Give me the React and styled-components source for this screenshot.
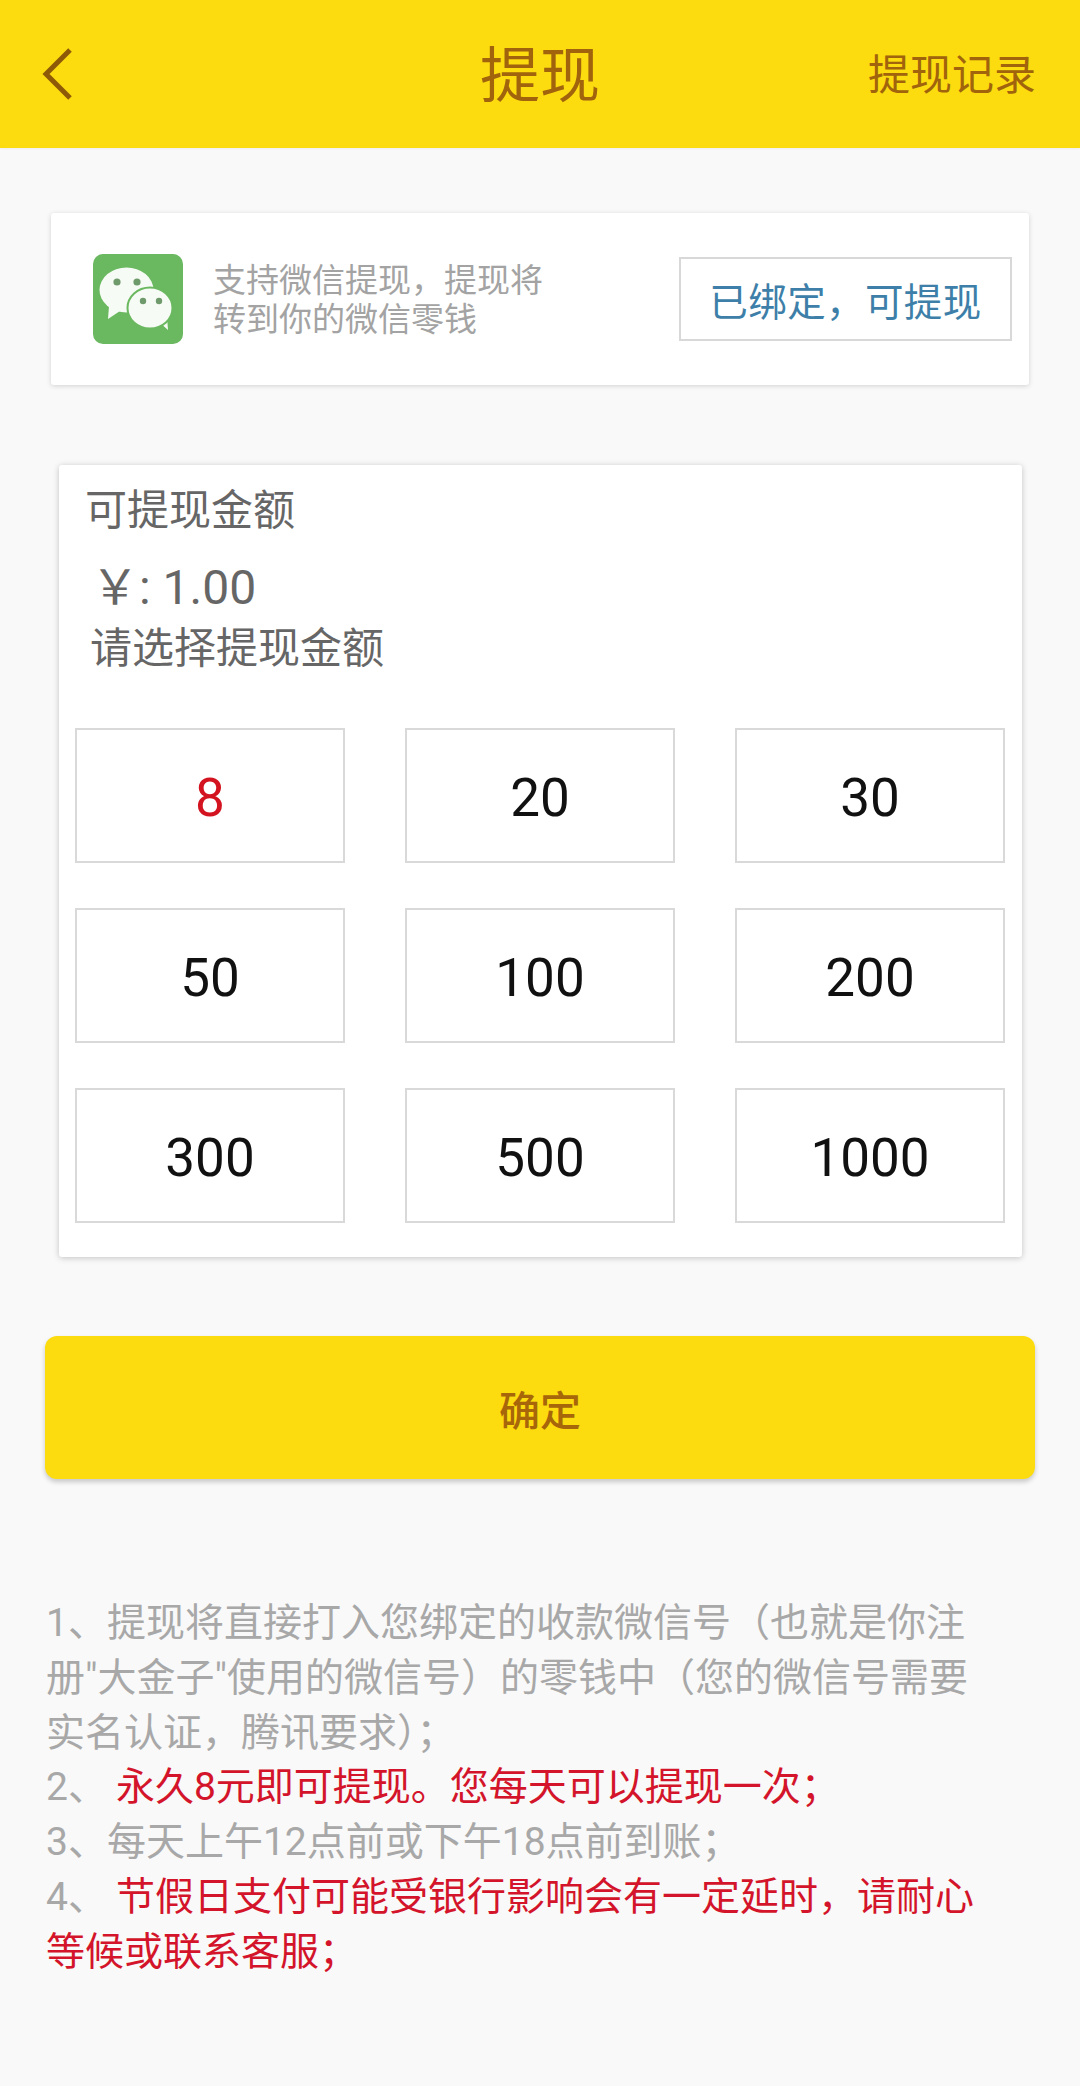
import React from "react";
import styled, { createGlobalStyle } from "styled-components";

const Global = createGlobalStyle`
  html, body { margin: 0; padding: 0; background: #f9f9f9; }
  * { box-sizing: border-box; }
  body { font-family: Roboto, "Noto Sans CJK SC", sans-serif; }
`;

const Page = styled.div`
  width: 1080px;
  height: 2086px;
  overflow: hidden;
  background: #f9f9f9;
  display: flex;
  flex-direction: column;
`;

const Header = styled.header`
  height: 148px;
  background: #fcdc0f;
  display: grid;
  grid-template-columns: 1fr auto 1fr;
  align-items: center;
  padding: 0 44px 0 42px;
  color: #a1640c;
  box-shadow: 0 1px 2px rgba(0, 0, 0, 0.05);
`;

const Back = styled.svg`
  width: 32px;
  height: 52px;
  display: block;
`;

const Title = styled.h1`
  margin: 6px 0 0 2px;
  font-size: 60px;
  font-weight: 400;
  line-height: 70px;
`;

const Record = styled.div`
  justify-self: end;
  font-size: 42px;
  line-height: 50px;
  margin-top: 4px;
`;

const BindCard = styled.section`
  margin: 65px 51px 0 51px;
  height: 172px;
  background: #fff;
  box-shadow: 0 1px 5px rgba(0, 0, 0, 0.16);
  border-radius: 3px;
  display: flex;
  align-items: center;
  padding: 0 17px 0 42px;
`;

const IconBox = styled.div`
  width: 90px;
  height: 90px;
  flex: none;
  background: #6ab85f;
  border-radius: 10px;
  display: flex;
  margin-bottom: 1px;
`;

const BindText = styled.p`
  margin: 2px 0 0 30px;
  flex: 1;
  font-size: 33px;
  line-height: 39px;
  color: #a3a3a3;
`;

const BindButton = styled.div`
  width: 333px;
  height: 84px;
  border: 2px solid #d8d8d8;
  background: #fff;
  color: #3d7fa8;
  font-size: 38.5px;
  letter-spacing: 0.4px;
  display: flex;
  align-items: center;
  justify-content: center;
`;

const AmountCard = styled.section`
  margin: 80px 58px 0 59px;
  height: 792px;
  background: #fff;
  border-radius: 3px;
  box-shadow: 0 1px 6px rgba(0, 0, 0, 0.22);
  padding: 0 16px;
  display: flex;
  flex-direction: column;
`;

const CardLabel = styled.div`
  margin: 21px 0 0 10px;
  font-size: 42px;
  line-height: 50px;
  color: #666;
`;

const Balance = styled.div`
  margin: 24px 0 0 16px;
  font-size: 48px;
  line-height: 56px;
  color: #666;
`;

const Prompt = styled.div`
  margin: 8px 0 0 15px;
  font-size: 42px;
  line-height: 50px;
  color: #666;
`;

const Grid = styled.div`
  margin-top: 54px;
  display: grid;
  grid-template-columns: repeat(3, 270px);
  grid-auto-rows: 135px;
  column-gap: 60px;
  row-gap: 45px;
`;

const Cell = styled.div`
  border: 2px solid #d9d9d9;
  padding-top: 4px;
  display: flex;
  align-items: center;
  justify-content: center;
  font-size: 53px;
  color: ${(p) => (p.$active ? "#d3131f" : "#111")};
`;

const Submit = styled.button`
  margin: 79px 45px 0 45px;
  height: 143px;
  border: 0;
  border-radius: 12px;
  background: #fcdc0f;
  color: #a8660a;
  font-family: inherit;
  font-size: 41px;
  font-weight: 500;
  box-shadow: 0 3px 5px rgba(0, 0, 0, 0.2);
`;

const Notes = styled.div`
  margin: 117px 45px 0 46px;
  font-size: 39px;
  line-height: 54.8px;
  color: #a8a8a8;
`;

const NoteLine = styled.div`
  white-space: nowrap;
`;

const Red = styled.span`
  color: #d3142a;
  margin-left: ${(p) => (p.$spaced ? "9px" : "0")};
`;

const WeChat = () => (
  <svg width="90" height="90" viewBox="0 0 90 90" aria-hidden="true">
    <ellipse cx="33.500" cy="36" rx="27" ry="22.500" fill="#f7fbf5" />
    <path d="M16 52l-1 13 12-8z" fill="#f7fbf5" />
    <path d="M66 68l9 8-1-13z" fill="#f7fbf5" />
    <ellipse cx="57" cy="54" rx="22.500" ry="20.500" fill="#f7fbf5" stroke="#6ab85f" strokeWidth="2" />
    <circle cx="24" cy="28" r="3.600" fill="#6f9a6b" />
    <circle cx="44" cy="28" r="3.600" fill="#6f9a6b" />
    <circle cx="50" cy="47" r="3.200" fill="#6f9a6b" />
    <circle cx="66" cy="47" r="3.200" fill="#6f9a6b" />
  </svg>
);

const amounts = [8, 20, 30, 50, 100, 200, 300, 500, 1000];

export default function App() {
  return (
    <Page>
      <Global />
      <Header>
        <Back viewBox="0 0 32 52" fill="none" aria-hidden="true">
          <path d="M28 2 4 26l24 24" stroke="#8f5a08" strokeWidth="5" />
        </Back>
        <Title>提现</Title>
        <Record>提现记录</Record>
      </Header>

      <BindCard>
        <IconBox><WeChat /></IconBox>
        <BindText>
          支持微信提现，提现将
          <br />
          转到你的微信零钱
        </BindText>
        <BindButton>已绑定，可提现</BindButton>
      </BindCard>

      <AmountCard>
        <CardLabel>可提现金额</CardLabel>
        <Balance>￥: 1.00</Balance>
        <Prompt>请选择提现金额</Prompt>
        <Grid>
          {amounts.map((a) => (
            <Cell key={a} $active={a === 8}>{a}</Cell>
          ))}
        </Grid>
      </AmountCard>

      <Submit>确定</Submit>

      <Notes>
        <NoteLine>1、提现将直接打入您绑定的收款微信号（也就是你注</NoteLine>
        <NoteLine>册"大金子"使用的微信号）的零钱中（您的微信号需要</NoteLine>
        <NoteLine>实名认证，腾讯要求）；</NoteLine>
        <NoteLine>2、<Red $spaced>永久8元即可提现。您每天可以提现一次；</Red></NoteLine>
        <NoteLine>3、每天上午12点前或下午18点前到账；</NoteLine>
        <NoteLine>4、<Red $spaced>节假日支付可能受银行影响会有一定延时，请耐心</Red></NoteLine>
        <NoteLine><Red>等候或联系客服；</Red></NoteLine>
      </Notes>
    </Page>
  );
}
